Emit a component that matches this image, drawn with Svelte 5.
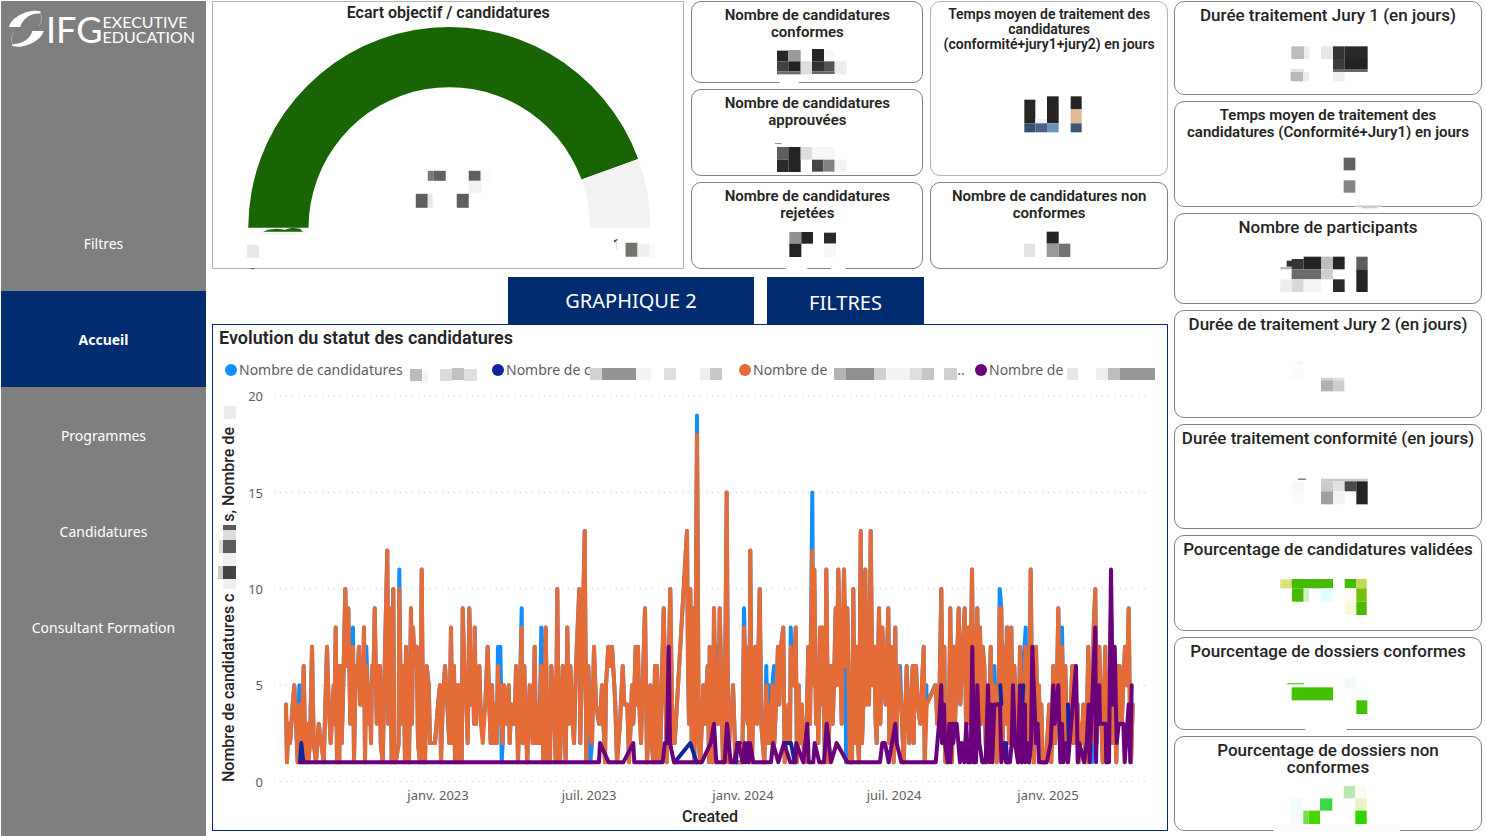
<script>
  const nav = [
    { label: 'Filtres' },
    { label: 'Accueil', active: true },
    { label: 'Programmes' },
    { label: 'Candidatures' },
    { label: 'Consultant Formation' },
  ];

  // Masked values: cells are [x, y, width, height, colour], three units to a pixel.
  // "left" and "bottom" give the corner of the drawing, "size" its height in pixels.
  const midLeft = [
    {
      title: 'Nombre de candidatures conformes', left: 174, bottom: 243, size: 36,
      cells: [[264, 149, 34, 32, '#262524'], [298, 147, 37, 34, '#9b9a99'], [369, 144, 36, 37, '#262524'], [405, 147, 32, 34, '#f8f8f8'],
        [264, 181, 34, 30, '#424140'], [298, 181, 37, 30, '#242322'], [335, 181, 34, 39, '#dedede'], [369, 181, 36, 30, '#333230'], [405, 181, 32, 30, '#555453'], [437, 181, 36, 39, '#ececec'],
        [264, 211, 71, 9, '#6c6b6a'], [369, 211, 68, 8, '#686766'], [272, 241, 58, 5, '#fff']],
    },
    {
      title: 'Nombre de candidatures approuvées', left: 174, bottom: 524, size: 36,
      cells: [[258, 428, 20, 2, '#555'], [264, 440, 34, 38, '#5e5d5c'], [298, 440, 37, 75, '#242322'], [335, 440, 34, 38, '#dedede'], [369, 440, 68, 36, '#f7f7f7'],
        [264, 478, 34, 37, '#2b2a29'], [369, 478, 34, 36, '#474644'], [403, 478, 34, 36, '#838281'], [437, 478, 36, 36, '#f4f4f4']],
    },
    {
      title: 'Nombre de candidatures rejetées', left: 174, bottom: 803, size: 36,
      cells: [[301, 695, 36, 35, '#929190'], [337, 695, 35, 35, '#262524'], [301, 730, 36, 40, '#242322'], [405, 697, 36, 33, '#2b2a29'], [405, 730, 36, 40, '#f7f7f7'], [290, 801, 65, 5, '#fff'], [425, 801, 45, 5, '#fff']],
    },
  ];

  const midRight = [
    {
      title: 'Temps moyen de traitement des candidatures (conformité+jury1+jury2) en jours', small: true, left: 897, bottom: 524, size: 82,
      cells: [[1003, 298, 33, 71, '#262524'], [1071, 288, 35, 81, '#262524'], [1142, 288, 33, 39, '#262524'], [1142, 327, 33, 42, '#dcba92'], [1036, 355, 35, 14, '#eef2fa'],
        [1003, 369, 33, 27, '#34506b'], [1036, 369, 35, 27, '#4f5f8b'], [1071, 369, 35, 27, '#6b95ba'], [1142, 369, 33, 27, '#40566e']],
    },
    {
      title: 'Nombre de candidatures non conformes', left: 897, bottom: 803, size: 36,
      cells: [[1070, 694, 36, 36, '#262524'], [1002, 730, 33, 40, '#e3e3e3'], [1070, 730, 36, 40, '#999896'], [1106, 730, 35, 40, '#737271']],
    },
  ];

  const right = [
    {
      title: 'Durée traitement Jury 1 (en jours)', left: 294, bottom: 286, size: 50,
      cells: [[364, 143, 38, 38, '#bcbcba'], [402, 143, 16, 38, '#ededed'], [453, 143, 36, 38, '#e7e7e6'], [489, 143, 35, 38, '#353432'], [524, 143, 69, 38, '#292827'],
        [489, 181, 35, 30, '#3d3c3b'], [524, 181, 69, 30, '#242322'], [489, 211, 104, 9, '#6a6968'], [362, 211, 40, 9, '#e3e3e3'], [362, 220, 38, 28, '#b8b8b7'], [400, 220, 17, 28, '#ededed'], [489, 220, 35, 28, '#eeeeed']],
    },
    {
      title: 'Temps moyen de traitement des candidatures (Conformité+Jury1) en jours', medium: true, left: 294, bottom: 621, size: 52,
      cells: [[521, 476, 35, 38, '#636261'], [521, 544, 35, 37, '#858483'], [552, 618, 86, 5, '#e2e2e2'], [575, 622, 48, 6, '#ccc']],
    },
    {
      title: 'Nombre de participants', left: 294, bottom: 911, size: 50,
      cells: [[350, 784, 30, 18, '#302f2e'], [331, 803, 34, 7, '#b7b7b7'], [365, 779, 36, 31, '#353432'], [401, 772, 52, 38, '#242322'], [453, 772, 36, 38, '#bebebe'], [489, 772, 35, 38, '#262524'], [559, 772, 34, 38, '#5e5d5c'],
        [365, 810, 88, 30, '#6c6b6a'], [453, 810, 36, 30, '#cfcfcf'], [559, 810, 34, 68, '#242322'], [331, 840, 34, 38, '#ededed'], [365, 840, 36, 38, '#d8d8d8'], [401, 840, 52, 38, '#f4f4f4'], [489, 840, 35, 38, '#2b2a29']],
    },
    {
      title: 'Durée de traitement Jury 2 (en jours)', left: 294, bottom: 1254, size: 56,
      cells: [[382, 1091, 17, 2, '#d5d5d5'], [364, 1104, 38, 37, '#fcfcfc'], [453, 1136, 36, 8, '#d2d2d2'], [489, 1136, 34, 8, '#dedede'], [453, 1144, 36, 33, '#b1b1b0'], [489, 1144, 34, 33, '#cdcdcc']],
    },
    {
      title: 'Durée traitement conformité (en jours)', left: 294, bottom: 334, size: 54,
      cells: [[384, 186, 24, 3, '#444'], [366, 194, 36, 30, '#f8f8f8'], [366, 224, 36, 38, '#fbfbfb'], [453, 186, 140, 8, '#c8c8c8'], [453, 194, 36, 30, '#cbcbca'], [489, 194, 35, 30, '#e2e2e2'], [524, 194, 35, 30, '#4b4a48'], [559, 194, 34, 69, '#242322'],
        [453, 224, 37, 39, '#a1a09e'], [490, 224, 34, 39, '#f2f2f2']],
    },
    {
      title: 'Pourcentage de candidatures validées', left: 294, bottom: 640, size: 54,
      cells: [[331, 488, 34, 27, '#dfe174'], [365, 487, 124, 28, '#47bb02'], [524, 487, 35, 28, '#47bb02'], [559, 487, 31, 28, '#bfd950'],
        [366, 515, 35, 40, '#47bb02'], [401, 515, 16, 40, '#d2efc4'], [453, 515, 36, 40, '#e2fdff'], [524, 515, 35, 40, '#fdfcee'], [559, 515, 31, 40, '#74c009'], [524, 555, 35, 40, '#f8f8da'], [559, 555, 31, 40, '#47bb02']],
    },
    {
      title: 'Pourcentage de dossiers conformes', left: 294, bottom: 939, size: 54,
      cells: [[352, 801, 50, 4, '#6dcb37'], [365, 814, 124, 39, '#43c000'], [524, 787, 35, 28, '#f3f9f3'], [559, 815, 33, 38, '#f7fdfc'], [559, 853, 33, 41, '#43c000'], [405, 937, 125, 5, '#fff']],
    },
    {
      title: 'Pourcentage de dossiers non conformes', left: 294, bottom: 1243, size: 47,
      cells: [[521, 1111, 35, 37, '#bce6b3'], [556, 1111, 34, 37, '#fbfcf0'], [362, 1148, 38, 77, '#f2fcff'], [450, 1148, 37, 37, '#3bd846'], [556, 1148, 34, 37, '#e9f5c9'],
        [400, 1185, 16, 40, '#78dd48'], [416, 1185, 34, 40, '#48d500'], [556, 1185, 34, 40, '#32d400'], [310, 1228, 380, 20, '#fafafa']],
    },
  ];

  const gaugeCells = [[428, 171, 6, 10, '#7a7978'], [434, 171, 12, 10, '#626160'], [469, 171, 12, 10, '#605f5e'], [481, 171, 12, 10, '#fbfbfb'], [469, 181, 13, 12, '#f2f2f2'],
    [416, 194, 12, 14, '#5f5e5d'], [428, 194, 5, 14, '#e9e9e9'], [457, 194, 12, 14, '#605f5e'], [247, 245, 12, 13, '#e8e8e8'], [626, 243, 12, 14, '#73726f'], [638, 244, 12, 13, '#eee'], [650, 244, 6, 13, '#fafafa']];

  const legend = [
    { label: 'Nombre de candidatures', color: '#118dff', width: 267, cells: [[0, 2, 12, '#bcbbba'], [12, 4, 6, '#f5f5f5'], [30, 2, 12, '#dcdcdc'], [42, 1, 12, '#c1c1c0'], [54, 2, 13, '#dedede']] },
    { label: 'Nombre de c', color: '#12239e', width: 247, cells: [[-8, 1, 12, '#d2d2d1'], [4, 1, 34, '#959492'], [38, 1, 15, '#f3f3f3'], [66, 1, 12, '#dedede'], [102, 1, 10, '#eee'], [112, 1, 12, '#c8c8c7']] },
    { label: 'Nombre de', color: '#e66c37', width: 236, tail: '..', cells: [[0, 1, 12, '#b5b4b3'], [12, 1, 28, '#918f8d'], [40, 1, 12, '#d0d0cf'], [52, 1, 24, '#f3f3f3'], [76, 1, 12, '#dedede'], [88, 1, 12, '#c6c6c5'], [110, 1, 13, '#d0d0cf']] },
    { label: 'Nombre de', color: '#6b007b', width: 180, cells: [[-3, 1, 11, '#e6e6e6'], [26, 1, 12, '#eee'], [38, 1, 12, '#bdbdbc'], [50, 1, 35, '#989795']] },
  ];

  // Daily counts as "position:value", one list per stretch of the time axis.
  const stretches = [0, 930, 1890];
  const parse = (lists) =>
    lists.flatMap((list, i) =>
      list.trim().split(/\s+/).filter(Boolean).map((p) => {
        const [x, v] = p.split(':').map(Number);
        return [x + stretches[i], v];
      })
    );
  const merge = (base, extra) =>
    [...new Map([...base, ...extra]).entries()].sort((a, b) => a[0] - b[0]);

  const orange = parse([
    `228:4 231:1 235:3 240:2 248:4 253:5 258:3 263:1 268:4 275:2 281:6 286:1 290:3 295:1 300:2 306:7 311:2 318:1 326:3 334:2 341:1 351:7 356:4 362:2 371:5 373:3 377:8 381:1 385:6 388:1 390:6 395:2 400:5 406:10 410:6 415:9 421:3 425:6 429:7 432:1 437:6 441:5 447:7 450:4 455:6 458:4 462:8 465:1 469:6 476:3 480:5 483:2 486:6 490:5 494:9 500:3 505:6 510:6 512:2 518:1 524:6 532:12 535:3 540:9 545:1 550:10 553:1 557:1 566:2 568:10 573:3 578:6 581:6 585:1 588:7 592:3 597:1 603:9 606:3 609:8 614:6 620:7 624:2 630:1 635:11 640:1 645:1 650:6 656:5 660:2 668:2 675:2 684:4 690:5 693:1 698:4 705:6 712:4 718:2 723:8 727:2 732:6 735:1 742:5 746:1 749:5 755:1 758:9 764:5 769:4 773:2 778:9 784:4 789:6 792:3 794:8 798:3 803:5 808:6 813:3 818:2 826:4 833:7 838:4 842:2 846:5 850:2 854:4 860:2 864:6 868:3 873:5 878:2 882:5 888:3 896:5 899:2 904:4 910:3 914:3 918:6 924:1 930:5`,
    `5:8 8:2 13:6 17:3 22:1 29:5 35:3 38:2 44:7 48:2 54:4 58:2 64:6 70:1 77:8 83:1 87:3 90:1 94:6 102:4 107:1 112:10 115:4 120:1 128:6 132:4 137:1 142:8 146:3 151:6 158:3 162:2 168:6 178:10 181:2 187:7 194:13 199:1 205:6 210:3 216:2 222:7 228:4 237:3 240:3 246:5 255:1 258:5 265:7 270:6 276:7 283:5 286:4 291:1 300:3 308:6 313:4 322:4 327:1 332:3 336:5 340:3 347:7 350:4 354:7 357:4 363:2 368:5 375:9 381:1 386:3 391:5 395:2 400:1 405:6 408:1 411:6 415:3 420:1 425:5 431:9 436:5 440:1 451:10 455:5 458:2 464:2 501:13 504:6 507:3 511:10 515:2 519:9 523:1 527:8 531:18 536:2 541:1 550:5 554:3 563:6 567:1 569:7 574:3 578:1 582:9 587:3 590:6 595:3 599:9 603:6 606:3 609:1 614:3 620:15 625:1 630:3 634:3 639:5 643:3 646:1 655:1 667:1 672:8 678:4 683:3 685:7 688:1 691:12 696:1 700:4 706:7 711:3 719:10 724:3 728:2 733:1 739:5 744:2 750:4 753:2 757:5 763:2 768:4 774:7 778:4 783:7 790:8 794:1 800:3 806:4 810:2 812:7 818:5 821:5 827:8 831:1 836:5 839:2 845:4 850:2 855:1 860:3 865:7 870:3 877:12 880:5 883:11 888:3 891:5 895:2 900:8 903:4 906:8 911:4 915:1 919:11 925:1 928:3 932:6 938:3 942:5 947:9 950:5 955:11`,
    `5:3 12:11 17:6 22:9 27:4 30:1 36:1 40:10 44:2 49:7 54:2 57:1 62:13 66:2 70:4 76:11 80:4 84:8 87:4 92:13 97:5 103:7 107:3 110:2 117:9 121:3 127:8 133:5 137:4 145:9 148:2 153:7 158:3 161:1 166:8 169:2 175:6 179:5 184:4 191:1 200:6 208:2 214:4 218:6 221:2 224:6 228:6 233:4 241:3 251:7 254:1 260:4 287:5 292:3 297:3 304:10 308:4 313:7 316:1 322:1 326:2 331:9 336:1 341:7 345:3 349:5 356:9 361:4 366:6 374:9 378:3 385:8 390:3 396:11 402:1 407:5 412:9 416:3 420:8 424:3 428:7 433:6 437:2 442:1 447:3 452:7 457:2 463:5 470:1 475:3 479:9 484:9 488:2 493:7 497:3 502:8 507:2 514:8 518:3 523:6 530:2 535:1 540:7 546:1 557:7 562:2 567:1 572:11 577:3 582:1 588:7 593:3 596:5 600:3 604:4 608:1 618:1 628:4 634:1 640:6 645:2 650:4 655:9 660:3 666:7 672:2 676:6 682:1 690:3 697:6 700:2 704:6 709:2 713:4 716:1 722:3 726:2 730:4 738:1 745:7 750:3 755:2 761:8 766:10 770:2 778:7 783:4 788:1 796:7 800:1 808:4 813:9 819:2 823:5 829:1 835:6 839:6 845:3 855:7 861:5 866:9 870:3 873:1 878:4`,
  ]);

  const blue = merge(orange, parse([
    `268:5 429:8 469:7 568:11 766:5 818:3 864:7 871:7 875:1 908:3`,
    `5:9 64:8 211:1 361:5 531:19 590:7 672:9 739:6 746:5 762:6 812:8 877:15`,
    `16:7 18:1 180:6 259:5 285:5 463:6 479:10 500:8 550:6 557:8 666:8 684:4 756:1`,
  ]));

  const purple = parse([
    `270:1`,
    `237:1 240:2 266:1 310:1 340:2 343:1 428:1 434:2 441:2 446:7 450:2 462:1 545:1 572:2 582:3 589:1 614:1 621:3 632:1 642:1 655:2 668:1 674:2 677:1 683:2 686:1 690:2 700:1 753:1 759:2 775:1 792:2 811:1 826:1 829:2 850:1 862:3 866:1 880:1 884:2 898:1 912:1 920:3 933:1 950:2`,
    `22:1 120:1 127:2 135:2 146:1 166:3 170:2 184:1 287:1 297:3 304:5 306:2 312:4 315:2 323:1 328:3 331:1 337:3 340:2 345:3 350:3 360:1 365:2 373:1 379:3 384:1 392:1 397:7 402:1 408:1 412:5 418:2 427:1 437:1 444:5 449:1 453:4 457:1 463:4 480:4 484:1 489:2 498:1 510:1 515:2 519:5 525:2 534:1 540:5 545:1 550:4 555:4 556:1 563:2 568:1 573:2 577:7 588:2 593:3 597:1 620:1 632:2 640:5 644:3 655:5 661:1 666:3 670:1 676:2 684:1 708:6 713:1 718:2 732:1 740:2 746:4 749:1 756:4 766:8 768:1 772:4 778:5 780:3 797:3 799:1 807:1 813:11 818:4 824:7 830:2 836:3 850:3 854:1 866:4 871:1 875:5`,
  ]);

  const navyParts = [
    [`270:1 274:2 280:1`], ['', `464:1 511:2 530:1`], ['', `648:1 652:2 660:2`], ['', `792:2 804:2 813:2 824:1`],
    ['', '', `471:4 475:4`], ['', '', `481:5 484:4`], ['', '', `498:2 502:1`], ['', '', `547:4 550:5`], ['', '', `684:4 686:2`],
  ].map(parse);

  const toY = (v) => 781.6 - v * 19.27;
  const line = (points) => points.map(([x, v], i) => `${i ? 'L' : 'M'}${(210 + x / 3).toFixed(1)} ${toY(v).toFixed(1)}`).join('');

  const ticksY = [0, 5, 10, 15, 20];
  const ticksX = [[438, 'janv. 2023'], [589, 'juil. 2023'], [743, 'janv. 2024'], [894, 'juil. 2024'], [1048, 'janv. 2025']];
</script>

{#snippet card(c)}
  <article class="card" class:small={c.small} class:medium={c.medium}>
    <h2>{c.title}</h2>
    <svg width="120" height={c.size} viewBox="{c.left} {c.bottom - c.size * 3} 360 {c.size * 3}" aria-hidden="true">
      {#each c.cells as [x, y, w, h, fill]}
        <rect {x} {y} width={w} height={h} {fill} />
      {/each}
    </svg>
  </article>
{/snippet}

<div class="page">
  <aside>
    <div class="logo">
      <svg width="35" height="38" viewBox="0 0 105 114" fill="#fff" aria-hidden="true">
        <path d="M93 4C62 -4 8 18 0 51L34 51C40 28 64 9 93 11C96 9 96 6 93 4Z" />
        <path d="M11 108C42 118 96 94 104 63L70 63C64 86 40 103 12 102C8 103 8 106 11 108Z" />
        <path d="M90 9C102 17 98 36 90 48M15 104C3 96 7 76 15 65" fill="none" stroke="#bbb" stroke-width="2" />
      </svg>
      <strong>IFG</strong>
      <div class="school"><span>EXECUTIVE</span><span>EDUCATION</span></div>
    </div>
    <nav>
      {#each nav as item}
        <a href="#{item.label}" class:active={item.active}>{item.label}</a>
      {/each}
    </nav>
  </aside>

  <main>
    <section class="top">
      <article class="gauge">
        <h2>Ecart objectif / candidatures</h2>
        <svg viewBox="213 22 471 246" role="img" aria-label="Ecart objectif / candidatures">
          <path d="M248.3 228A201.3 201.3 0 0 1 638.7 159.2L582 179.8A141 141 0 0 0 308.6 228Z" fill="#196404" />
          <path d="M638.7 159.2A201.3 201.3 0 0 1 650.9 228L590.6 228A141 141 0 0 0 582 179.8Z" fill="#f3f2f1" />
          <path d="M263 232L268 230L277 229L285 230L292 228L300 229L303 232Z" fill="#196404" />
          <path d="M259 233H303V234H259Z" fill="#e2eee0" />
          <path d="M614 241L618 239L618 240L615 243Z" fill="#444" />
          <path d="M617 242V250" stroke="#ddd" />
          <path d="M251 269H254" stroke="#555" />
          {#each gaugeCells as [x, y, w, h, fill]}
            <rect {x} {y} width={w} height={h} {fill} />
          {/each}
        </svg>
      </article>
      <div class="stack three">{#each midLeft as c}{@render card(c)}{/each}</div>
      <div class="stack two">{#each midRight as c}{@render card(c)}{/each}</div>
    </section>

    <div class="tabs">
      <button class="wide">GRAPHIQUE 2</button>
      <button>FILTRES</button>
    </div>

    <section class="chart">
      <h2>Evolution du statut des candidatures</h2>
      <ul>
        {#each legend as item}
          <li style="flex-basis: {item.width}px">
            <i style="background: {item.color}"></i>{item.label}
            <svg width="123" height="14" aria-hidden="true">
              {#each item.cells as [x, y, w, fill]}
                <rect {x} {y} width={w} height="12" {fill} />
              {/each}
            </svg>{item.tail ?? ''}
          </li>
        {/each}
      </ul>
      <svg class="plot" viewBox="213 384 954 445" role="img" aria-label="Evolution du statut des candidatures">
        {#each ticksY as t}
          <line x1="274" x2="1146" y1={toY(t)} y2={toY(t)} stroke="#c8c6c4" stroke-dasharray="1 5" />
          <text x="263" y={toY(t) + 5} text-anchor="end">{t}</text>
        {/each}
        {#each ticksX as [x, label]}
          <text {x} y="800" text-anchor="middle">{label}</text>
        {/each}
        <g fill="none" stroke-width="4" stroke-linejoin="round" stroke-linecap="round">
          <path d={line(blue)} stroke="#118dff" />
          <path d={line(orange)} stroke="#e66c37" />
          {#each navyParts as part}
            <path d={line(part)} stroke="#12239e" />
          {/each}
          <path d={line(purple)} stroke="#6b007b" />
        </g>
        <text class="axis" x="710" y="822" text-anchor="middle">Created</text>
        <text class="axis" transform="translate(234 782) rotate(-90)">Nombre de candidatures c</text>
        <text class="axis" transform="translate(234 427) rotate(-90)" text-anchor="end">s, Nombre de</text>
        <rect x="219" y="524" width="17" height="68" fill="#fff" />
        <rect x="223" y="525" width="13" height="5" fill="#5a5958" />
        <rect x="223" y="530" width="13" height="10" fill="#dcdcdc" />
        <rect x="219" y="540" width="4" height="13" fill="#dedede" />
        <rect x="223" y="540" width="13" height="13" fill="#5c5b5a" />
        <rect x="223" y="553" width="13" height="13" fill="#f0f0f0" />
        <rect x="218" y="566" width="5" height="13" fill="#ccc" />
        <rect x="223" y="566" width="13" height="13" fill="#444342" />
        <rect x="223" y="579" width="13" height="10" fill="#f0f0f0" />
        <rect x="224" y="406" width="12" height="13" fill="#ebebeb" />
      </svg>
    </section>
  </main>

  <div class="side">{#each right as c}{@render card(c)}{/each}</div>
</div>

<style>
  :global(body) { margin: 0; background: #fff; }
  .page {
    box-sizing: border-box;
    min-height: 100vh;
    padding: 1px 4px 5px 1px;
    display: grid;
    grid-template-columns: 205px minmax(0, 1fr) 308px;
    gap: 6px;
    font-family: 'Noto Sans', 'Open Sans', sans-serif;
    color: #252423;
  }
  h2 { margin: 0; font: 600 16px/17px Roboto, sans-serif; }

  aside { background: #7f7f7f; margin-bottom: -5px; color: #fff; }
  .logo { display: flex; align-items: center; height: 56px; padding-left: 8px; font-family: Lato, sans-serif; }
  .logo strong { font-size: 36px; font-weight: 400; margin-left: 2px; }
  .school { display: flex; flex-direction: column; font-size: 16px; line-height: 15px; }
  .school span { height: 15px; }
  nav { padding-top: 138px; }
  nav a {
    display: flex; align-items: center; justify-content: center; height: 96px; box-sizing: border-box;
    padding-top: 1px; color: #fff; font-size: 14px; text-decoration: none;
  }
  nav a.active { background: #012c6f; font-weight: 700; }

  main { display: flex; flex-direction: column; min-width: 0; }
  .top { display: grid; grid-template-columns: 473fr 232fr 238fr; gap: 7px; min-height: 268px; }
  .gauge { border: 1px solid #b3b3b3; text-align: center; }
  .gauge h2 { padding-top: 1px; line-height: 19px; }
  .gauge svg { display: block; width: 100%; overflow: visible; }
  .stack { display: grid; gap: 6px; }
  .three { grid-template-rows: 82fr 87fr 87fr; }
  .two { grid-template-rows: 175fr 87fr; }
  .side { display: grid; gap: 6px; grid-template-rows: 94fr 106fr 91fr 108fr 105fr 96fr 93fr 95fr; }

  .card {
    border: 1px solid #808080; border-radius: 10px; min-height: 0;
    display: flex; flex-direction: column; align-items: center; justify-content: space-between;
  }
  .card h2 { padding: 5px 4px 0; text-align: center; }
  .card svg { display: block; overflow: visible; flex: none; }
  .side .card h2 { font-size: 17px; font-weight: 500; }
  .side .card:last-child h2 { max-width: 240px; }
  .side .medium h2, .stack .card h2 { font-size: 15px; font-weight: 600; }
  .stack .card h2 { max-width: 200px; padding-inline: 0; }
  .stack .card.small h2 { max-width: 212px; font-size: 14px; line-height: 15px; }
  .stack .card.small { border-color: #b3b3b3; }

  .tabs { display: flex; justify-content: flex-end; gap: 13px; padding: 8px 244px 0 0; }
  .tabs button { width: 157px; height: 47px; border: 0; padding: 4px 0 0; background: #012c6f; color: #fff; font: 20px 'Noto Sans', sans-serif; }
  .tabs .wide { width: 246px; padding-top: 0; }

  .chart { border: 1px solid #012c6f; flex: 1; display: flex; flex-direction: column; }
  .chart h2 { padding: 3px 6px 0; font-size: 18px; line-height: 19px; }
  ul { display: flex; margin: 0; padding: 13px 0 0 12px; list-style: none; height: 24px; font-size: 14px; line-height: 20px; color: #605e5c; }
  li { display: flex; white-space: nowrap; min-width: 0; }
  i { width: 12px; height: 12px; border-radius: 50%; margin: 4px 2px 0 0; flex: none; }
  li svg { margin: 7px 0 0 7px; overflow: visible; flex: none; }
  .plot { display: block; width: 100%; }
  .plot text { font-size: 13px; fill: #605e5c; }
  .plot .axis { font: 500 16px Roboto, sans-serif; fill: #252423; }
</style>
